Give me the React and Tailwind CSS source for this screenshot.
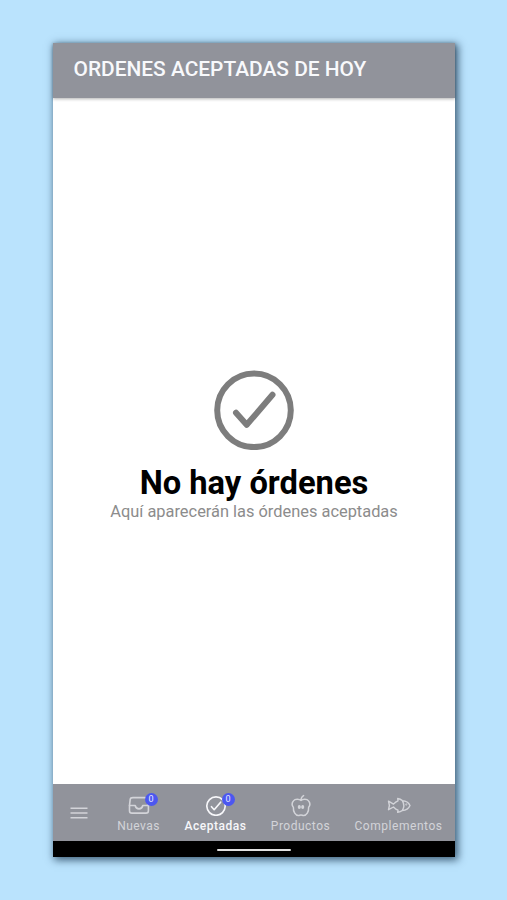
const stroke = {
  fill: 'none',
  stroke: 'currentColor',
  strokeLinecap: 'round',
  strokeLinejoin: 'round',
};

function CheckCircle({ className, width = 6 }) {
  return (
    <svg viewBox="0 0 80 80" className={className} {...stroke} strokeWidth={width}>
      <circle cx="40" cy="40.300" r="36.800" />
      <path d="M22 42.800 32.700 54.800 58.500 24.800" />
    </svg>
  );
}

function Badge() {
  return (
    <span className="absolute left-[17px] top-[-2px] flex h-[13px] w-[13px] items-center justify-center rounded-full bg-[#4c57f0] text-[9px] leading-none text-[#e4e6ff]">
      0
    </span>
  );
}

function Tab({ className, label, badge, children }) {
  return (
    <div className={`flex shrink-0 flex-col items-center pt-[11px] ${className}`}>
      <div className="relative h-[22px] w-[22px]">
        {children}
        {badge && <Badge />}
      </div>
      <span className="mt-px whitespace-nowrap text-[12px] leading-[16px]">{label}</span>
    </div>
  );
}

export default function App() {
  return (
    <div className="h-[900px] w-[507px] overflow-hidden bg-[#bae3fd] pl-[53px] pt-[43px] font-['Roboto',sans-serif]">
      <div className="flex h-[814px] w-[402px] flex-col bg-white shadow-[2px_2px_8px_1px_rgba(20,50,75,0.75)]">
        <header className="relative flex h-[55px] shrink-0 items-center bg-[#91939b] pl-[20.5px] shadow-[0_1px_3px_rgba(0,0,0,0.3)]">
          <h1 className="whitespace-nowrap pb-[3px] text-[20.9px] font-medium leading-6 text-[#f8f9fc]">
            ORDENES ACEPTADAS DE HOY
          </h1>
        </header>

        <main className="flex flex-1 flex-col items-center pt-[272px]">
          <CheckCircle className="h-[80px] w-[80px] text-[#7d7d7d]" />
          <h2 className="mt-[14px] whitespace-nowrap text-[32.7px] font-bold leading-[38px] text-black">
            No hay órdenes
          </h2>
          <p className="whitespace-nowrap text-[16.4px] leading-[20px] text-[#8c8c8c]">
            Aquí aparecerán las órdenes aceptadas
          </p>
        </main>

        <nav className="flex h-[57px] shrink-0 bg-[#91939b] text-[#d3d4d9]">
          <div className="flex w-[52px] shrink-0 items-center justify-center">
            <svg viewBox="0 0 18 12" className="h-[12px] w-[18px]" {...stroke} strokeLinecap="butt" strokeWidth="1.5">
              <path d="M.5 1.200h17M.5 6h17M.5 10.800h17" />
            </svg>
          </div>
          <Tab className="w-[67px]" label={<span className="tracking-[0.45px]">Nuevas</span>} badge>
            <svg viewBox="0 0 22 22" className="h-full w-full" {...stroke} strokeWidth="1.600">
              <path d="M5 2.600h12c1.200 0 1.800.6 2.100 1.700l1.300 6v5.400c0 1.500-.9 2.400-2.400 2.400H3.900c-1.500 0-2.400-.9-2.400-2.400v-5.400l.7-6C2.400 3.200 3.400 2.600 5 2.600Z" />
              <path d="M1.500 10.500h5.700c.4 2 1.700 3.400 3.800 3.400s3.400-1.400 3.800-3.400h5.700" />
            </svg>
          </Tab>
          <Tab
            className="w-[87px] text-[#f7f7fa]"
            label={<span className="font-medium tracking-[0.5px]">Aceptadas</span>}
            badge
          >
            <CheckCircle className="ml-[1px] mt-[1px] h-[20px] w-[20px]" width={6.5} />
          </Tab>
          <Tab className="w-[83px]" label={<span className="tracking-[0.5px]">Productos</span>}>
            <svg viewBox="0 0 22 22" className="h-full w-full overflow-visible" {...stroke} strokeWidth="1.500">
              <path d="M11 5.500C9.500 4 5.300 3.400 3.400 5.900c-1.600 1.900-1.600 4.400 0 6.500-.4 4.400 2.200 8.100 5 8.100 1.200 0 1.400-.6 2.600-.6s1.400.6 2.600.6c2.800 0 5.400-3.700 5-8.100 1.600-2.100 1.600-4.600 0-6.500C16.700 3.400 12.500 4 11 5.500ZM11 5.500c0-2.300.8-4 2.600-4.900" />
              <ellipse cx="9.300" cy="12" rx=".8" ry="1.200" fill="currentColor" />
              <ellipse cx="12.700" cy="12" rx=".8" ry="1.200" fill="currentColor" />
            </svg>
          </Tab>
          <Tab className="w-[113px]" label={<span className="tracking-[0.55px]">Complementos</span>}>
            <svg viewBox="0 0 22 22" className="h-full w-full overflow-visible" {...stroke} strokeWidth="1.400">
              <path d="M.5 6.200 5.500 9.100c1.400-1.600 2.800-2.700 4.500-3.300L9.700 3.500c2 .3 3.400 1 4.600 2.100 3.600.2 6.500 2.200 7.700 4.900-1.200 2.800-4.100 4.800-7.700 5-1.200 1-2.600 1.600-4.600 1.900l.3-2.200c-1.700-.6-3.100-1.700-4.500-3.200L.5 14.700l.9-4.200ZM14.300 5.600c2 3.300 2 6.700 0 9.900" />
              <circle cx="18.300" cy="9.600" r=".3" />
            </svg>
          </Tab>
        </nav>

        <div className="flex h-[16px] shrink-0 items-start justify-center bg-black pt-[8px]">
          <div className="h-[2px] w-[74px] rounded-full bg-[#e2e2e2]" />
        </div>
      </div>
    </div>
  );
}
